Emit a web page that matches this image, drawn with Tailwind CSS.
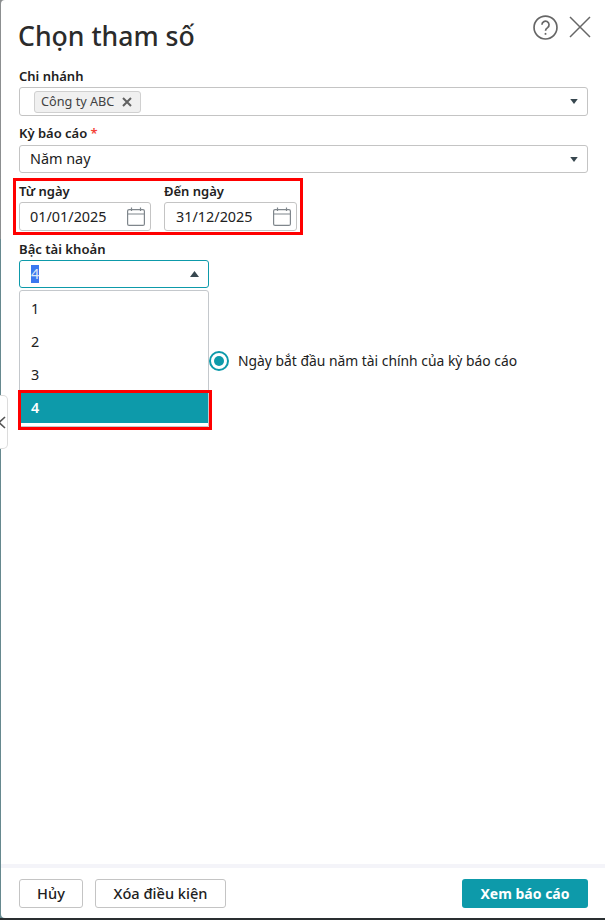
<!DOCTYPE html>
<html lang="en">
<head>
    <meta charset="UTF-8">
    <title>Chọn tham số</title>
    <script src="https://cdn.jsdelivr.net/npm/@tailwindcss/browser@4"></script>
</head>
<body class="font-['Noto_Sans',sans-serif] text-[#212121]">
    <div class="relative w-[605px] h-[920px] overflow-hidden bg-linear-to-b from-[#8c8f90] from-[26%] to-[#66898f] to-[26%]">
        <!-- Panel -->
        <div class="absolute left-[1px] top-0 w-[604px] h-[918px] bg-white rounded-tl-[4px] rounded-bl-[4px] flex flex-col">
            <div class="flex-1 pl-[18px] pr-[17px]">
                <div class="flex items-start justify-between h-[67px]">
                    <h1 class="text-[26.6px] leading-[36px] font-medium mt-[18px] ml-[-1px] text-[#2b2b2b]">Chọn tham số</h1>
                    <div class="flex items-start gap-[11px] mt-[15px] mr-[-3px]">
                        <svg width="25" height="25" viewBox="0 0 24 24" fill="none" stroke="#666666" stroke-width="1.6">
                            <circle cx="12" cy="12" r="11"/>
                            <path d="M8.600 9.400a3.400 3.400 0 1 1 5.400 2.700c-1.300.9-2 1.500-2 3"/>
                            <path d="M12 17.200v1.800"/>
                        </svg>
                        <svg class="mt-[1px]" width="22" height="22" viewBox="0 0 22 22" fill="none" stroke="#666666" stroke-width="1.5">
                            <path d="M1 1l20 20M21 1L1 21"/>
                        </svg>
                    </div>
                </div>

                <label class="block text-[13px] leading-[18px] font-semibold">Chi nhánh</label>
                <div class="mt-[2px] h-[29px] flex items-center justify-between border border-[#c4c4c4] rounded-[3px] pl-[14px] pr-[9px]">
                    <span class="flex items-center justify-between w-[107px] h-[22px] pl-[6px] pr-[8px] bg-[#f0f0f0] border border-[#d0d0d0] rounded-[3px] text-[12.700px] text-[#424242]">
                        Công ty ABC
                        <svg width="10" height="10" viewBox="0 0 10 10" fill="none" stroke="#616161" stroke-width="2"><path d="M1 1l8 8M9 1L1 9"/></svg>
                    </span>
                    <svg width="8" height="5" viewBox="0 0 9 6" fill="#37474f"><path d="M0 0h9L4.500 6z"/></svg>
                </div>

                <label class="block mt-[8px] text-[13px] leading-[18px] font-semibold">Kỳ báo cáo <span class="text-[#f44336]">*</span></label>
                <div class="mt-[3px] h-[28px] flex items-center justify-between border border-[#c4c4c4] rounded-[3px] pl-[10px] pr-[9px] text-[14.400px]">
                    Năm nay
                    <svg width="8" height="5" viewBox="0 0 9 6" fill="#37474f"><path d="M0 0h9L4.500 6z"/></svg>
                </div>

                <div class="flex gap-[13px] mt-[9px]">
                    <div class="w-[132px]">
                        <label class="block text-[13px] leading-[18px] font-semibold">Từ ngày</label>
                        <div class="mt-[2px] h-[29px] flex items-center justify-between border border-[#c4c4c4] rounded-[3px] pl-[10px] pr-[5px] text-[14.400px]">
                            01/01/2025
                            <svg width="18" height="19" viewBox="0 0 18 19" fill="none" stroke="#7f868c" stroke-width="1.2"><rect x="0.600" y="2.600" width="16.800" height="15.800" rx="1.500"/><path d="M0.600 7h16.800M4.500 0.500v3.500M13.500 0.500v3.500"/></svg>
                        </div>
                    </div>
                    <div class="w-[133px]">
                        <label class="block text-[13px] leading-[18px] font-semibold">Đến ngày</label>
                        <div class="mt-[2px] h-[29px] flex items-center justify-between border border-[#c4c4c4] rounded-[3px] pl-[11px] pr-[5px] text-[14.400px]">
                            31/12/2025
                            <svg width="18" height="19" viewBox="0 0 18 19" fill="none" stroke="#7f868c" stroke-width="1.2"><rect x="0.600" y="2.600" width="16.800" height="15.800" rx="1.500"/><path d="M0.600 7h16.800M4.500 0.500v3.500M13.500 0.500v3.500"/></svg>
                        </div>
                    </div>
                </div>

                <label class="block mt-[9px] text-[13.100px] leading-[18px] font-semibold">Bậc tài khoản</label>
                <div class="mt-[2px] w-[190px] h-[28px] flex items-center justify-between border border-[#0d9aaa] rounded-[3px] pl-[11px] pr-[9px] text-[14.400px]">
                    <span class="bg-[#3b78f0] text-[#dfe8f5] leading-[18px]">4</span>
                    <svg width="9" height="6" viewBox="0 0 9 6" fill="#37474f"><path d="M0 6h9L4.500 0z"/></svg>
                </div>

                <div class="flex items-start mt-[2px]">
                    <div class="w-[190px] h-[137px] pt-[1px] border border-[#c4c8cc] rounded-t-[3px] text-[14.400px] flex flex-col shrink-0">
                        <div class="h-[33px] flex items-center pl-[11px]">1</div>
                        <div class="h-[33px] flex items-center pl-[11px]">2</div>
                        <div class="h-[33px] flex items-center pl-[11px]">3</div>
                        <div class="h-[31px] mt-[1px] flex items-center pl-[11px] bg-[#0d9aaa] text-white font-semibold">4</div>
                    </div>
                    <div class="flex items-center gap-[9px] mt-[61px] text-[13.860px]">
                        <span class="w-[20px] h-[20px] rounded-full border-[2px] border-[#0d9aaa] flex items-center justify-center">
                            <span class="w-[10px] h-[10px] rounded-full bg-[#0d9aaa]"></span>
                        </span>
                        Ngày bắt đầu năm tài chính của kỳ báo cáo
                    </div>
                </div>
            </div>

            <!-- Footer -->
            <div class="h-[4px] bg-[#f4f4f9]"></div>
            <div class="h-[50px] flex items-start pt-[11px] justify-between pl-[18px] pr-[17px] text-[14.600px] font-medium">
                <div class="flex gap-[12px]">
                    <button class="w-[64px] h-[29px] border border-[#c4c4c4] rounded-[3px]">Hủy</button>
                    <button class="w-[131px] h-[29px] border border-[#c4c4c4] rounded-[3px]">Xóa điều kiện</button>
                </div>
                <button class="w-[126px] h-[29px] bg-[#0d9aaa] text-white font-bold rounded-[3px] text-[14px]">Xem báo cáo</button>
            </div>
        </div>

        <!-- Bottom edge of the page behind the panel -->
        <div class="absolute left-0 bottom-0 w-full h-[2px] bg-[#2a2f31]"></div>

        <!-- Side collapse handle -->
        <div class="absolute left-0 top-[395px] w-[8px] h-[54px] bg-white border border-l-0 border-[#dcdcdc] rounded-r-[5px] overflow-hidden">
            <svg class="absolute left-[-2px] top-[20px]" width="8" height="13" viewBox="0 0 8 13" fill="none" stroke="#555555" stroke-width="1.600"><path d="M7 1L1 6.500l6 5.500"/></svg>
        </div>

        <!-- Red annotation boxes -->
        <div class="absolute left-[13px] top-[178px] w-[290px] h-[57px] border-[3px] border-[#ff0000]"></div>
        <div class="absolute left-[18px] top-[390px] w-[194px] h-[40px] border-[3px] border-[#ff0000]"></div>
    </div>
</body>
</html>
